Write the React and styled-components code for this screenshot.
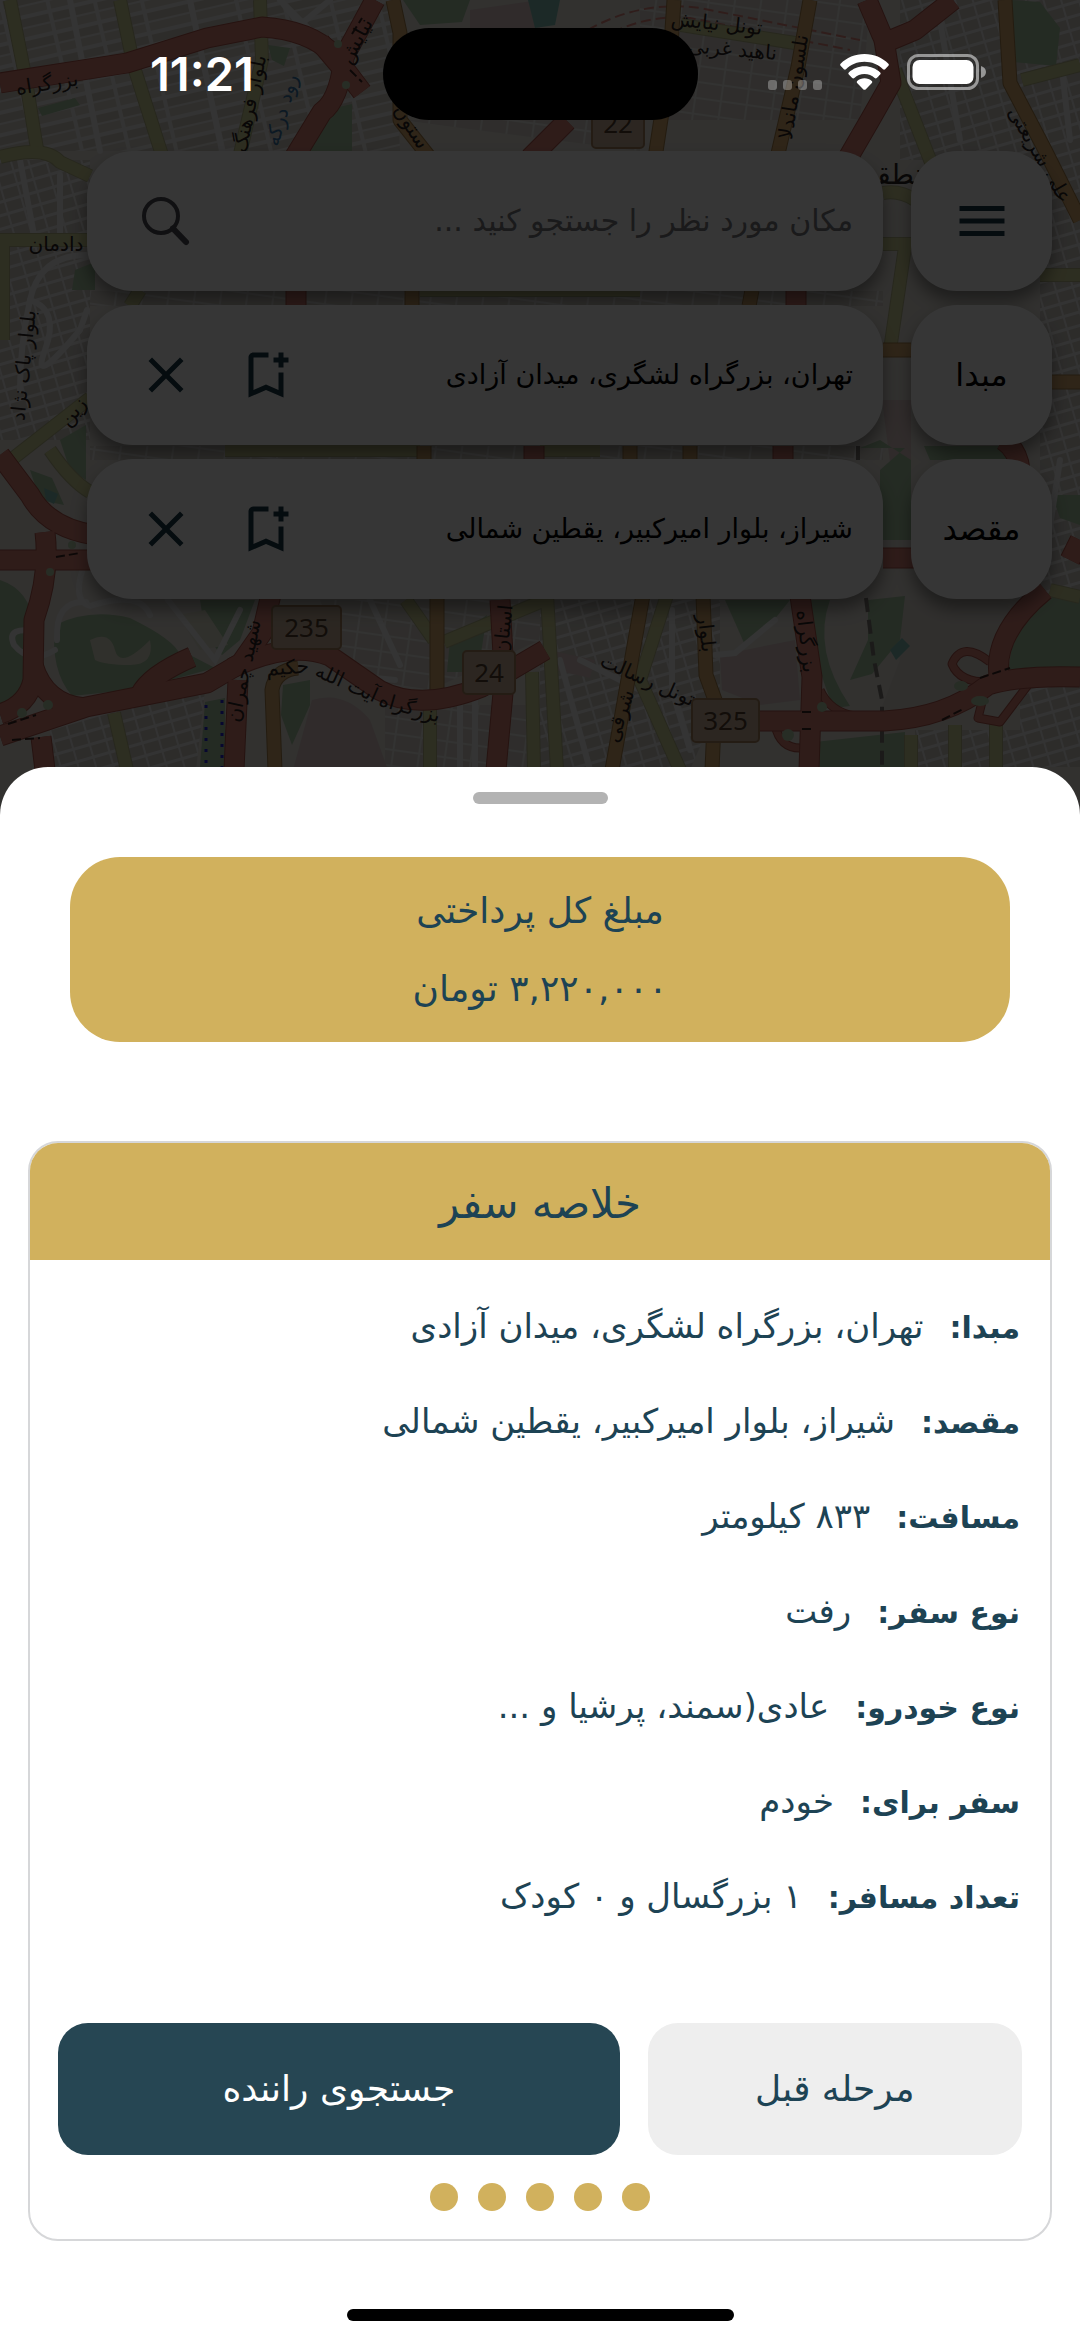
import React from "react";
import styled, { createGlobalStyle } from "styled-components";
import { MdClose, MdMenu, MdOutlineBookmarkAdd } from "react-icons/md";

const color = {
  gold: "#d1b15d",
  navy: "#264653",
  icon: "#1a3a48",
  ink: "#1d4354",
  line: "#d6d7d9",
  soft: "#eeeeee",
};

const GlobalStyle = createGlobalStyle`
  *, *::before, *::after { box-sizing: border-box; }
  body {
    margin: 0;
    background: #fff;
    font-family: "DejaVu Sans", sans-serif;
    -webkit-font-smoothing: antialiased;
  }
  button, input { font: inherit; color: inherit; }
`;

const Screen = styled.div`
  min-height: 100vh;
  display: flex;
  flex-direction: column;
`;

const MapArea = styled.section`
  position: relative;
  isolation: isolate;
  overflow: hidden;
  padding-bottom: 216px;
  background: #efebe4;
`;

const MapSvg = styled.svg`
  position: absolute;
  inset: 0;
  z-index: -1;
  width: 100%;
  height: 100%;
`;

const Scrim = styled.div`
  position: absolute;
  inset: 0;
  background: rgba(0, 0, 0, 0.79);
`;

const StatusBar = styled.header`
  position: relative;
  z-index: 1;
  direction: ltr;
  display: grid;
  grid-template-columns: 1fr 315px 1fr;
  height: 151px;
  padding: 28px 0 31px;
  color: #fff;
`;

const Clock = styled.time`
  align-self: center;
  padding-left: 150px;
  font: 600 47px/48px Inter, sans-serif;
`;

const Island = styled.div`
  border-radius: 46px;
  background: #000;
`;

const StatusIcons = styled.div`
  display: flex;
  align-items: center;
  justify-content: flex-end;
  gap: 18px;
  padding: 0 94px 4px 0;
`;

const Stack = styled.div`
  display: flex;
  flex-direction: column;
  gap: 14px;
  padding: 0 28px 0 87px;
`;

const PlaceRow = styled.div`
  direction: rtl;
  display: grid;
  grid-template-columns: 141px 1fr;
  gap: 28px;
  height: 140px;
`;

const tile = `
  border: 0;
  border-radius: 46px;
  background: #fff;
  box-shadow: 0 10px 16px rgba(0, 0, 0, 0.4);
`;

const MenuButton = styled.button`
  ${tile}
  display: grid;
  place-items: center;
  padding: 0;
  color: ${color.icon};
`;

const Tag = styled.label`
  ${tile}
  display: grid;
  place-items: center;
  font-size: 32px;
  line-height: 48px;
  color: #000;
`;

const Field = styled.div`
  ${tile}
  display: flex;
  align-items: center;
  gap: 40px;
  padding: 0 30px 0 49px;
`;

const FieldInput = styled.input`
  flex: 1;
  min-width: 0;
  padding: 0;
  border: 0;
  outline: 0;
  background: transparent;
  font-size: ${(p) => (p.$search ? 30 : 27)}px;
  line-height: 40px;
  color: #000;
  &::placeholder { color: #7a7a7e; opacity: 1; }
`;

const IconButton = styled.button`
  display: grid;
  place-items: center;
  width: 60px;
  height: 60px;
  padding: 0;
  border: 0;
  background: none;
  color: ${color.icon};
`;

const Sheet = styled.main`
  position: relative;
  direction: rtl;
  flex: 1;
  display: flex;
  flex-direction: column;
  margin-top: -48px;
  padding: 25px 28px 20px;
  border-radius: 48px 48px 0 0;
  background: #fff;
  color: ${color.ink};
`;

const Handle = styled.div`
  align-self: center;
  width: 135px;
  height: 12px;
  border-radius: 6px;
  background: #b3b3b3;
`;

const Total = styled.section`
  display: grid;
  align-content: center;
  gap: 30px;
  height: 185px;
  margin: 53px 42px 0;
  border-radius: 50px;
  background: ${color.gold};
  text-align: center;
  font-size: 36px;
  line-height: 48px;
`;

const Line = styled.p`
  margin: 0;
`;

const Card = styled.section`
  margin-top: 99px;
  border: 2px solid ${color.line};
  border-radius: 30px;
  overflow: hidden;
`;

const CardTitle = styled.h2`
  margin: 0;
  padding: 35px 0 30px;
  background: ${color.gold};
  text-align: center;
  font-size: 42px;
  font-weight: 400;
  line-height: 52px;
`;

const Details = styled.dl`
  display: grid;
  gap: 45px;
  margin: 0;
  padding: 42px 30px 0;
  font-size: 34px;
  line-height: 48px;
`;

const Detail = styled.div`
  display: flex;
  align-items: baseline;
  gap: 26px;
`;

const Term = styled.dt`
  font-size: 30px;
  font-weight: 700;
`;

const Value = styled.dd`
  margin: 0;
`;

const Actions = styled.div`
  display: grid;
  grid-template-columns: 2fr 3fr;
  gap: 28px;
  padding: 101px 28px 0;
`;

const Action = styled.button`
  height: 132px;
  padding: 0;
  border: 0;
  border-radius: 30px;
  background: ${(p) => (p.$primary ? color.navy : color.soft)};
  color: ${(p) => (p.$primary ? "#fff" : color.ink)};
  font-size: 36px;
  line-height: 48px;
`;

const Steps = styled.div`
  display: flex;
  justify-content: center;
  gap: 20px;
  padding: 28px 0;
`;

const Step = styled.span`
  width: 28px;
  height: 28px;
  border-radius: 50%;
  background: ${color.gold};
`;

const HomeBar = styled.div`
  align-self: center;
  width: 387px;
  height: 12px;
  margin-top: auto;
  border-radius: 6px;
  background: #000;
`;

const SearchGlyph = () => (
  <svg width="60" height="60" viewBox="0 0 60 60" fill="none" stroke="#4f4e54" strokeLinecap="round" aria-hidden="true">
    <circle cx="25" cy="25" r="17" strokeWidth="4" />
    <path d="M37 37.500L50 51" strokeWidth="6" />
  </svg>
);

const SignalDots = () => (
  <svg width="54" height="36" viewBox="0 0 54 36" fill="#fff" fillOpacity="0.3" aria-hidden="true">
    {[0, 15, 30, 45].map((x) => (
      <rect key={x} x={x} y="26" width="9" height="10" rx="3" />
    ))}
  </svg>
);

const Wifi = () => (
  <svg width="49" height="36" viewBox="0 0 49 36" fill="#fff" aria-hidden="true">
    <path d="M24.500 0C34 0 42.500 3.700 48.400 9.700c.6.600.6 1.500 0 2.100l-3.300 3.400c-.6.600-1.500.600-2.100 0C38.200 10.500 31.700 7.800 24.500 7.800S10.800 10.500 6 15.200c-.6.600-1.500.600-2.100 0L.6 11.800c-.6-.6-.6-1.500 0-2.100C6.500 3.700 15 0 24.500 0z" />
    <path d="M24.500 12.300c6.100 0 11.600 2.400 15.700 6.200.6.600.6 1.500 0 2.100l-3.400 3.400c-.6.600-1.500.6-2.100.1-2.700-2.500-6.300-4-10.200-4s-7.500 1.500-10.200 4c-.6.500-1.500.5-2.100-.1l-3.400-3.400c-.6-.6-.6-1.500 0-2.100 4.100-3.800 9.600-6.200 15.700-6.200z" />
    <path d="M24.500 24.200c2.800 0 5.300 1 7.300 2.700.6.500.6 1.500.1 2.100l-6.300 6.400c-.6.600-1.600.6-2.200 0L17.100 29c-.5-.6-.5-1.600.1-2.100 2-1.700 4.500-2.700 7.300-2.700z" />
  </svg>
);

const Battery = () => (
  <svg width="79" height="36" viewBox="0 0 79 36" aria-hidden="true">
    <rect x="1.500" y="1.500" width="69" height="33" rx="10" fill="none" stroke="#fff" strokeOpacity="0.5" strokeWidth="3" />
    <rect x="5.500" y="6" width="61" height="24" rx="7" fill="#fff" />
    <path d="M74 12c3 1 5 3.300 5 6s-2 5-5 6z" fill="#fff" fillOpacity="0.5" />
  </svg>
);

const parks = [
  "M403 0H470L462 22L420 25z",
  "M317 112L352 104V151H310z",
  "M1012 0L1040 2L1060 28L1056 66L1012 62z",
  "M268 45L290 48L284 66L272 60z",
  "M38 108L75 98L80 105L42 116z",
  "M75 270L95 262V290H72z",
  "M60 440L86 425V480L70 470z",
  "M30 470L52 478L64 505L40 500z",
  "M0 580Q30 590 34 625L28 700L0 715z",
  "M55 625Q90 608 130 618Q175 640 180 655Q150 690 110 692L72 696Q50 670 55 625z",
  "M205 702L225 698V767H200z",
  "M283 685L310 680V705L292 745L281 715z",
  "M450 640L487 615L478 672H447z",
  "M200 600H255L240 640L222 655Q205 640 200 600z",
  "M725 600H790L770 625L745 645z",
  "M810 600L830 600Q812 650 850 706L834 708Q812 660 810 600z",
  "M868 600L905 596L900 640L872 674L850 680L868 640z",
  "M860 448H905L880 470V540H911V460L880 440z",
  "M1018 606L1080 590V667L1008 672z",
  "M815 742L905 732V767H809z",
  "M1052 495H1080V525L1060 518z",
  "M924 446H1005L1015 460H930z",
  "M150 670L190 655L215 668L155 684z",
];
const motorways = [
  "M0 83L127 63L207 38L262 27Q310 30 334 55L362 92",
  "M345 55L362 24L375 0",
  "M345 50Q340 100 322 112L294 158",
  "M320 42L352 80",
  "M567 121L530 158",
  "M867 0L881 33L888 48",
  "M953 0L915 30L884 43",
  "M884 40L891 83L870 120L848 158",
  "M0 455L30 495Q48 528 95 535",
  "M0 560H95",
  "M45 532Q50 575 34 620L33 680Q28 705 0 714",
  "M0 736L86 707L207 683L241 663L262 633L272 590",
  "M33 665Q45 705 85 708",
  "M140 695Q150 675 192 657",
  "M232 668Q290 640 330 656L379 690Q420 712 482 687L545 650",
  "M238 680L234 770",
  "M41 737L45 770",
  "M503 693L496 770",
  "M503 655L500 600",
  "M800 596L812 677L809 770",
  "M755 721H884Q946 718 988 685Q1020 675 1080 677",
  "M1045 590Q990 635 1000 682",
  "M883 558H915",
  "M296 291V306", "M796 290V306", "M783 446V462", "M534 446V462",
  "M1003 440Q1018 450 1020 470",
  "M1070 560L1080 540",
];
const ramps = [
  "M994 682Q960 684 952 664Q962 640 990 662",
  "M775 725Q780 748 800 748",
  "M820 690Q830 712 855 716",
  "M985 690L978 718L1000 722L1028 685",
];
const primaries = [
  "M393 0L400 33V120L430 158",
  "M674 0L670 60L655 158",
  "M810 0L798 67L777 158",
  "M1005 0L1010 83L1045 150L1080 220",
  "M437 595V690",
  "M275 770L272 690Q275 670 298 668",
  "M643 595L612 770",
  "M703 595L706 675L715 700L712 770",
  "M883 350H911", "M1050 382H1080",
  "M412 290V306", "M752 290L749 306", "M630 446V462", "M424 446V462", "M690 446V462",
];
const secondaries = [
  "M10 0L25 75L38 155",
  "M120 0L134 67L162 155",
  "M260 0L262 60L239 158",
  "M0 157Q45 145 60 162L90 176",
  "M0 240H90",
  "M3 245V340",
  "M90 398L7 463",
  "M50 450Q70 480 90 492",
  "M681 25L795 43",
  "M895 70L932 165",
  "M1080 65L1022 80",
  "M883 193Q900 190 915 200",
  "M883 244H911", "M905 247L890 350",
  "M1040 275H1080",
  "M114 713L127 770",
  "M430 708V770", "M532 672L534 770",
  "M545 600L444 642", "M406 600L434 640",
  "M547 595L557 770",
  "M667 595L640 680L680 770",
  "M911 735V770", "M955 725V770", "M996 720V770",
  "M1050 590L1080 597",
  "M130 306L140 290", "M420 290H640", "M225 450H420", "M540 450H600",
];
const streets = [
  "M70 0L100 151", "M190 0L222 151", "M280 0L310 30", "M20 160L35 240", "M60 175V235",
  "M86 255Q40 255 30 300T20 390", "M30 300Q60 310 45 350T80 330L87 310",
  "M86 560Q70 600 90 606Q140 590 150 615", "M57 640Q55 600 86 602",
  "M40 632Q5 625 14 645Q30 665 55 650",
  "M168 600L215 660L240 610", "M330 640L345 675L395 680", "M370 600L400 665",
  "M715 655L735 653L775 620", "M672 610V690L690 750", "M560 660L590 770", "M580 660L640 690",
  "M460 700V770", "M475 700V770", "M1022 400L1010 500", "M1060 460L1045 560",
  "M280 0L300 25L330 0", "M940 20L960 140", "M1062 70L1070 140",
];
const labels = [
  { x: 48, y: 90, t: "بزرگراه", r: -9 },
  { x: 256, y: 105, t: "بلوار فرهنگ", r: -78 },
  { x: 288, y: 112, t: "رود درکه", r: -74, c: "#3c78a8" },
  { x: 362, y: 44, t: "نیایش", r: -62 },
  { x: 406, y: 130, t: "ستون", r: 58 },
  { x: 716, y: 30, t: "تونل نیایش", r: 6 },
  { x: 732, y: 56, t: "ناهید غربی", r: 5 },
  { x: 800, y: 88, t: "نلسون ماندلا", r: -81 },
  { x: 1034, y: 158, t: "علی شریعتی", r: 60 },
  { x: 56, y: 251, t: "دادمان", r: 0 },
  { x: 30, y: 366, t: "بلوار پاک نژاد", r: -84 },
  { x: 78, y: 416, t: "زین", r: -50 },
  { x: 250, y: 672, t: "شهید چمران", r: -78 },
  { x: 288, y: 674, t: "حکیم", r: -4 },
  { x: 344, y: 689, t: "آیت الله", r: 24 },
  { x: 408, y: 714, t: "بزرگراه", r: 16 },
  { x: 510, y: 630, t: "استان", r: -84 },
  { x: 645, y: 686, t: "تونل رسالت", r: 24 },
  { x: 700, y: 634, t: "بلوار", r: 84 },
  { x: 626, y: 718, t: "شرقی", r: -72 },
  { x: 800, y: 642, t: "بزرگراه", r: 84 },
];
const shields = [
  { x: 592, y: 100, w: 52, h: 48, t: "22" },
  { x: 272, y: 606, w: 69, h: 43, t: "235" },
  { x: 463, y: 651, w: 52, h: 43, t: "24" },
  { x: 692, y: 699, w: 67, h: 43, t: "325" },
];

const Roads = ({ lines, edge, fill, width }) => (
  <g fill="none" strokeLinejoin="round">
    {lines.map((d) => <path key={`e${d}`} d={d} stroke={edge} strokeWidth={width + 2} />)}
    {lines.map((d) => <path key={d} d={d} stroke={fill} strokeWidth={width} />)}
  </g>
);

const CityMap = () => (
  <MapSvg viewBox="0 0 1080 815" preserveAspectRatio="xMidYMin slice" aria-hidden="true">
    <defs>
      <pattern id="blocksA" width="46" height="22" patternUnits="userSpaceOnUse" patternTransform="rotate(-13)">
        <rect width="46" height="22" fill="#f2f1ee" />
        <rect x="2" y="2" width="42" height="8" fill="#d6d1c8" />
        <rect x="2" y="12" width="42" height="8" fill="#dcd8d0" />
      </pattern>
      <pattern id="blocksB" width="26" height="16" patternUnits="userSpaceOnUse" patternTransform="rotate(8)">
        <rect width="26" height="16" fill="#efeeeb" />
        <rect x="1" y="1" width="24" height="14" fill="#dbd6ce" />
      </pattern>
      <pattern id="blocksC" width="17" height="13" patternUnits="userSpaceOnUse" patternTransform="rotate(-16)">
        <rect width="17" height="13" fill="#f2f1ef" />
        <rect x="1" y="1" width="15" height="10" fill="#d2cec8" />
      </pattern>
    </defs>
    <rect width="1080" height="815" fill="#e9e5de" />
    <path d="M0 0H393L400 151H0z" fill="url(#blocksA)" />
    <path d="M400 120H860L870 0H640V151z" fill="url(#blocksB)" />
    <path d="M900 0H1080V600H1040V160H900z" fill="url(#blocksC)" />
    <path d="M0 160H90V440H0z" fill="url(#blocksC)" />
    <path d="M90 291H883V306H90zM90 446H883V460H90z" fill="url(#blocksB)" />
    <path d="M50 725L205 690L196 770H50z" fill="url(#blocksC)" />
    <path d="M320 600H540V640L430 690L350 680zM385 705H530V767H385z" fill="url(#blocksB)" />
    <path d="M540 600H720V700L690 770H540z" fill="url(#blocksC)" />
    <path d="M915 730H1080V767H915zM1020 680H1080V767H1020z" fill="url(#blocksC)" />
    <path d="M293 770L312 700Q345 690 370 720L388 770zM720 655L795 640L800 700L760 705L722 690zM882 400H911V460L890 462zM470 10L540 0V28H470zM540 648L595 660L590 678L545 668z" fill="#e0cbc9" />
    <path d="M0 590L25 600V640L0 650zM895 600H1035Q990 635 995 680Q940 710 880 712L900 660z" fill="#e2dcd5" />
    <g fill="#a9c9a4">
      {parks.map((d) => <path key={d} d={d} />)}
    </g>
    <path d="M528 0H560L555 25L535 28zM890 650L902 638L910 646L896 660zM44 488L58 494L54 504L46 500z" fill="#83c3b8" />
    <path d="M90 640Q110 630 115 650T150 640Q155 665 130 665T95 660zM178 615L205 610L228 645L200 650z" fill="#e3e2cf" />
    <path d="M206 705V767M222 700V767M28 485L38 498" stroke="#2222dd" strokeWidth="3" strokeDasharray="3 8" fill="none" />
    <path d="M588 30Q640 0 700 8L860 40M600 40Q640 14 690 18L850 50" stroke="#e08a80" strokeWidth="2" strokeDasharray="10 5" fill="none" />
    <g fill="none" stroke="#f4f4f4" strokeWidth="6" strokeLinecap="round">
      {streets.map((d) => <path key={d} d={d} />)}
    </g>
    <path d="M866 598L874 660L882 700V767M858 446V470" stroke="#827d78" strokeWidth="4" strokeDasharray="14 8" fill="none" />
    <Roads lines={secondaries} edge="#b7b98b" fill="#d6d79a" width={12} />
    <Roads lines={primaries} edge="#a8824c" fill="#dcae72" width={13} />
    <Roads lines={ramps} edge="#b0584c" fill="#dd8579" width={7} />
    <Roads lines={motorways} edge="#b0584c" fill="#dd8579" width={19} />
    <g fill="#b9d3ae">
      <circle cx="338" cy="44" r="4" /><circle cx="346" cy="85" r="4" />
      <circle cx="22" cy="713" r="5" /><circle cx="48" cy="705" r="5" />
      <circle cx="50" cy="572" r="4" /><circle cx="72" cy="545" r="4" />
      <circle cx="822" cy="707" r="5" /><circle cx="788" cy="735" r="6" />
      <ellipse cx="961" cy="686" rx="7" ry="5" /><ellipse cx="980" cy="701" rx="9" ry="5" />
    </g>
    <path d="M8 724L36 715M12 740L40 738M980 678L1010 668M942 720L965 708M352 34L362 18M350 70L362 82M802 712H814M802 729H814M56 557L80 553" stroke="#3b2724" strokeWidth="2" strokeDasharray="9 4" fill="none" />
    <g fontFamily="DejaVu Sans, sans-serif" fontSize="20" fill="#2a2422" textAnchor="middle">
      {labels.map((l) => (
        <text key={`${l.t}${l.x}`} x={l.x} y={l.y} fill={l.c} transform={`rotate(${l.r} ${l.x} ${l.y})`}>{l.t}</text>
      ))}
      <text x="900" y="184" fontSize="28">منطقه</text>
    </g>
    <g fontFamily="Noto Sans, sans-serif" fontSize="26" textAnchor="middle">
      {shields.map((s) => (
        <g key={s.t}>
          <rect x={s.x} y={s.y} width={s.w} height={s.h} rx="4" fill="#cdb59e" stroke="#a8835f" strokeWidth="2" />
          <text x={s.x + s.w / 2} y={s.y + s.h / 2 + 9} fill="#54402e">{s.t}</text>
        </g>
      ))}
    </g>
  </MapSvg>
);

const places = [
  { id: "origin", label: "مبدا", value: "تهران، بزرگراه لشگری، میدان آزادی" },
  { id: "target", label: "مقصد", value: "شیراز، بلوار امیرکبیر، یقطین شمالی" },
];

const details = [
  ["مبدا:", "تهران، بزرگراه لشگری، میدان آزادی"],
  ["مقصد:", "شیراز، بلوار امیرکبیر، یقطین شمالی"],
  ["مسافت:", "۸۳۳ کیلومتر"],
  ["نوع سفر:", "رفت"],
  ["نوع خودرو:", "عادی(سمند، پرشیا و ..."],
  ["سفر برای:", "خودم"],
  ["تعداد مسافر:", "۱ بزرگسال و ۰ کودک"],
];

export default function App() {
  return (
    <Screen lang="fa">
      <GlobalStyle />
      <MapArea>
        <CityMap />
        <StatusBar>
          <Clock>11:21</Clock>
          <Island />
          <StatusIcons>
            <SignalDots />
            <Wifi />
            <Battery />
          </StatusIcons>
        </StatusBar>
        <Stack>
          <PlaceRow>
            <MenuButton type="button" aria-label="منو"><MdMenu size={60} /></MenuButton>
            <Field>
              <FieldInput $search type="text" aria-label="جستجو" placeholder="مکان مورد نظر را جستجو کنید ..." />
              <IconButton type="button" aria-label="جستجو"><SearchGlyph /></IconButton>
            </Field>
          </PlaceRow>
          {places.map((p) => (
            <PlaceRow key={p.id}>
              <Tag htmlFor={p.id}>{p.label}</Tag>
              <Field>
                <FieldInput id={p.id} type="text" defaultValue={p.value} />
                <IconButton type="button" aria-label="ذخیره"><MdOutlineBookmarkAdd size={60} /></IconButton>
                <IconButton type="button" aria-label="حذف"><MdClose size={60} /></IconButton>
              </Field>
            </PlaceRow>
          ))}
        </Stack>
        <Scrim />
      </MapArea>
      <Sheet>
        <Handle />
        <Total>
          <Line>مبلغ کل پرداختی</Line>
          <Line>۳,۲۲۰,۰۰۰ تومان</Line>
        </Total>
        <Card>
          <CardTitle>خلاصه سفر</CardTitle>
          <Details>
            {details.map(([term, value]) => (
              <Detail key={term}>
                <Term>{term}</Term>
                <Value>{value}</Value>
              </Detail>
            ))}
          </Details>
          <Actions>
            <Action type="button">مرحله قبل</Action>
            <Action type="button" $primary>جستجوی راننده</Action>
          </Actions>
          <Steps>
            {[1, 2, 3, 4, 5].map((n) => <Step key={n} />)}
          </Steps>
        </Card>
        <HomeBar />
      </Sheet>
    </Screen>
  );
}
